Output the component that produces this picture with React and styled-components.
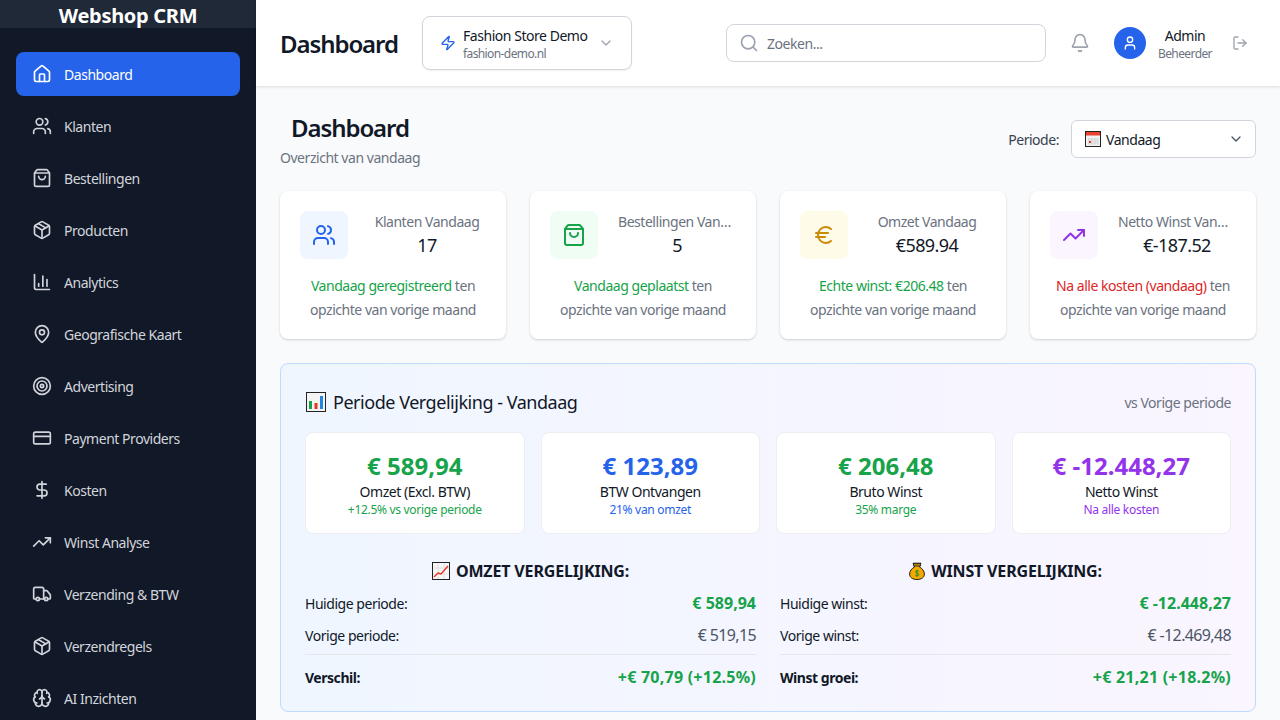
import React from 'react';
import styled, { createGlobalStyle } from 'styled-components';
import {
  House, Users, ShoppingBag, Package, ChartColumn, MapPin, Target, CreditCard, DollarSign,
  TrendingUp, Truck, Brain, Zap, ChevronDown, Search, Bell, User, LogOut, Euro,
} from 'lucide-react';

const GlobalStyle = createGlobalStyle`
  html, body, #root { margin: 0; height: 100%; }
  body {
    font-family: "Noto Sans", "Open Sans", sans-serif;
    color: #111827;
    overflow: hidden;
  }
  * { box-sizing: border-box; letter-spacing: -0.033em; }
`;

const Shell = styled.div`
  display: flex;
  width: 1280px;
  height: 720px;
  overflow: hidden;
`;

const Sidebar = styled.aside`
  width: 256px;
  flex-shrink: 0;
  background: #111827;
  overflow: hidden;
`;

const Brand = styled.div`
  height: 28px;
  background: #1f2937;
  color: #fff;
  font-size: 20px;
  font-weight: 700;
  line-height: 32px;
  letter-spacing: -0.015em;
  text-align: center;
  overflow: hidden;
`;

const Nav = styled.nav`
  display: flex;
  flex-direction: column;
  gap: 8px;
  padding: 24px 16px;
`;

const NavItem = styled.a`
  display: flex;
  align-items: center;
  gap: 12px;
  flex-shrink: 0;
  height: 44px;
  padding: 0 16px;
  border-radius: 8px;
  font-size: 14px;
  background: ${(p) => (p.$active ? '#2563eb' : 'transparent')};
  color: ${(p) => (p.$active ? '#fff' : '#d1d5db')};
`;

const Main = styled.div`
  flex: 1;
  min-width: 0;
  display: flex;
  flex-direction: column;
  background: #f9fafb;
`;

const TopBar = styled.header`
  height: 86px;
  flex-shrink: 0;
  display: flex;
  align-items: center;
  padding: 0 24px;
  background: #fff;
  box-shadow: 0 1px 3px rgba(0, 0, 0, 0.12);
  position: relative;
`;

const TopTitle = styled.h1`
  margin: 0;
  width: 142px;
  font-size: 24px;
  font-weight: 600;
  letter-spacing: -0.045em;
  color: #111827;
`;

const StoreSelect = styled.div`
  width: 210px;
  height: 54px;
  display: flex;
  align-items: center;
  padding: 0 17px;
  gap: 7px;
  background: #fff;
  border: 1px solid #d1d5db;
  border-radius: 8px;
  box-shadow: 0 1px 2px rgba(0, 0, 0, 0.06);
`;

const StoreText = styled.div`
  flex: 1;
  display: flex;
  flex-direction: column;
  padding-top: 2px;
  white-space: nowrap;
`;

const StoreName = styled.span`
  font-size: 14px;
  line-height: 20px;
  color: #111827;
`;

const StoreDomain = styled.span`
  font-size: 12px;
  line-height: 16px;
  letter-spacing: -0.05em;
  color: #6b7280;
`;

const SearchBox = styled.div`
  width: 320px;
  height: 38px;
  margin-left: 94px;
  display: flex;
  align-items: center;
  gap: 8px;
  padding: 0 12px;
  border: 1px solid #d1d5db;
  border-radius: 8px;
  font-size: 14px;
  color: #6b7280;
`;

const BellButton = styled.div`
  display: flex;
  margin-left: 24px;
  color: #9ca3af;
`;

const UserBlock = styled.div`
  display: flex;
  align-items: center;
  gap: 12px;
  margin-left: 24px;
`;

const Avatar = styled.div`
  width: 32px;
  height: 32px;
  border-radius: 50%;
  background: #2563eb;
  color: #fff;
  display: flex;
  align-items: center;
  justify-content: center;
`;

const UserText = styled.div`
  display: flex;
  flex-direction: column;
  align-items: center;
  padding-top: 2px;
`;

const UserName = styled.span`
  font-size: 14px;
  line-height: 20px;
  color: #111827;
`;

const UserRole = styled.span`
  font-size: 12px;
  line-height: 16px;
  letter-spacing: -0.05em;
  color: #6b7280;
`;

const LogoutButton = styled.div`
  display: flex;
  margin-left: 20px;
  color: #9ca3af;
`;

const Content = styled.main`
  flex: 1;
  min-height: 0;
  padding: 24px;
  overflow: hidden;
`;

const PageHead = styled.div`
  display: flex;
  justify-content: space-between;
  align-items: center;
  margin-bottom: 23px;
`;

const PageTitle = styled.h2`
  margin: 0;
  padding: 0 0 2px 11px;
  font-size: 24px;
  line-height: 36px;
  font-weight: 600;
  letter-spacing: -0.045em;
  color: #111827;
`;

const PageSub = styled.p`
  margin: 0;
  font-size: 14px;
  line-height: 20px;
  color: #6b7280;
`;

const PeriodWrap = styled.div`
  display: flex;
  align-items: center;
  gap: 12px;
  font-size: 14px;
  color: #374151;
`;

const PeriodSelect = styled.div`
  width: 185px;
  height: 38px;
  display: flex;
  align-items: center;
  gap: 5px;
  padding: 0 11px 0 13px;
  background: #fff;
  border: 1px solid #d1d5db;
  border-radius: 6px;
  color: #111827;
`;

const PeriodLabel = styled.span`
  flex: 1;
`;

const StatGrid = styled.div`
  display: grid;
  grid-template-columns: repeat(4, minmax(0, 1fr));
  gap: 24px;
  margin-bottom: 24px;
`;

const StatCard = styled.div`
  background: #fff;
  border-radius: 8px;
  padding: 20px;
  height: 148px;
  box-shadow: 0 1px 3px rgba(0, 0, 0, 0.12), 0 1px 2px rgba(0, 0, 0, 0.06);
`;

const StatTop = styled.div`
  display: flex;
  align-items: center;
  height: 48px;
`;

const IconBox = styled.div`
  width: 48px;
  height: 48px;
  flex-shrink: 0;
  display: flex;
  align-items: center;
  justify-content: center;
  border-radius: 8px;
  background: ${(p) => p.$bg};
  color: ${(p) => p.$color};
`;

const StatText = styled.div`
  flex: 1;
  min-width: 0;
  margin-left: 20px;
  text-align: center;
`;

const StatLabel = styled.div`
  font-size: 14px;
  line-height: 20px;
  color: #6b7280;
  white-space: nowrap;
  overflow: hidden;
  text-overflow: ellipsis;
`;

const StatValue = styled.div`
  font-size: 18px;
  line-height: 27px;
  color: #111827;
`;

const StatNote = styled.p`
  margin: 15px 0 0;
  font-size: 14px;
  line-height: 24px;
  text-align: center;
  color: #6b7280;
`;

const Highlight = styled.span`
  color: ${(p) => p.$color};
`;

const Panel = styled.section`
  height: 349px;
  padding: 24px;
  border: 1px solid #bfdbfe;
  border-radius: 8px;
  background: linear-gradient(to right, #eff6ff, #faf5ff);
`;

const PanelHead = styled.div`
  display: flex;
  align-items: center;
  justify-content: space-between;
  height: 28px;
  margin-bottom: 16px;
`;

const PanelTitle = styled.h3`
  display: flex;
  align-items: center;
  gap: 7px;
  margin: 0 0 0 1px;
  font-size: 18px;
  font-weight: 400;
  letter-spacing: -0.026em;
  color: #111827;
`;

const PanelHint = styled.span`
  font-size: 14px;
  color: #6b7280;
`;

const KpiGrid = styled.div`
  display: grid;
  grid-template-columns: repeat(4, minmax(0, 1fr));
  gap: 16px;
  margin-bottom: 25px;
`;

const KpiCard = styled.div`
  height: 102px;
  padding-top: 16px;
  background: #fff;
  border: 1px solid #eceef1;
  border-radius: 8px;
  text-align: center;
`;

const KpiValue = styled.div`
  font-size: 24px;
  line-height: 33px;
  font-weight: 700;
  letter-spacing: 0;
  color: ${(p) => p.$color};
`;

const KpiLabel = styled.div`
  font-size: 14px;
  line-height: 20px;
  color: #111827;
`;

const KpiNote = styled.div`
  font-size: 12px;
  line-height: 16px;
  letter-spacing: -0.025em;
  color: ${(p) => p.$color};
`;

const CompareGrid = styled.div`
  display: grid;
  grid-template-columns: 1fr 1fr;
  gap: 24px;
`;

const CompareTitle = styled.h4`
  display: flex;
  align-items: center;
  justify-content: center;
  gap: 6px;
  margin: 0 0 4px;
  height: 24px;
  font-size: 16px;
  font-weight: 700;
  letter-spacing: -0.01em;
  color: #111827;
`;

const Row = styled.div`
  display: flex;
  justify-content: space-between;
  align-items: center;
  height: 32px;
  font-size: 14px;
  color: #111827;
`;

const RowTotal = styled(Row)`
  height: 45px;
  margin-top: 3px;
  border-top: 1px solid #e5e7eb;
  font-weight: 700;
`;

const Amount = styled.span`
  font-size: 16px;
  font-weight: ${(p) => (p.$bold ? 700 : 400)};
  letter-spacing: ${(p) => (p.$bold ? '0' : '-0.04em')};
  color: ${(p) => p.$color};
`;

const TotalAmount = styled(Amount)`
  letter-spacing: 0.015em;
`;

const CalendarEmoji = () => (
  <svg width="16" height="16" viewBox="0 0 16 16">
    <rect x="0.5" y="0.5" width="15" height="15" fill="#f1f1f1" stroke="#222" />
    <rect x="1" y="1" width="14" height="3.5" fill="#e8432e" />
    <path d="M4 7v7M7 7v7M10 7v7M13 7v7M3 8h10M3 10h10M3 12h10" stroke="#c9c9c9" strokeWidth="0.7" />
    <rect x="4" y="10" width="2" height="2" fill="#e8432e" />
  </svg>
);

const BarsEmoji = () => (
  <svg width="20" height="20" viewBox="0 0 20 20">
    <rect x="0.5" y="0.5" width="19" height="19" fill="#f4f4f4" stroke="#222" />
    <path d="M3 17V9h3v8z" fill="#16a34a" />
    <path d="M8.5 17v-6h3v6z" fill="#ea3323" />
    <path d="M14 17V4h3v13z" fill="#1e88e5" />
  </svg>
);

const LineEmoji = () => (
  <svg width="18" height="18" viewBox="0 0 18 18">
    <rect x="0.5" y="0.5" width="17" height="17" fill="#f7f7f7" stroke="#222" />
    <path d="M6 1v16M12 1v16M1 6h16M1 12h16" stroke="#ddd" strokeWidth="0.8" />
    <path d="M2 15l4-4 3 1 7-8" fill="none" stroke="#ea3323" strokeWidth="1.4" />
  </svg>
);

const MoneyEmoji = () => (
  <svg width="16" height="18" viewBox="0 0 16 18">
    <path d="M4 1.2h8L10.4 5c3 1.4 5 4.200 5 7 0 3.500-3 5.500-7.400 5.500S.6 15.500.6 12c0-2.800 2-5.600 5-7z" fill="#f5a800" stroke="#222" strokeWidth="1" />
    <path d="M4.500 1.500h7v2.500h-7z" fill="#b8860b" stroke="#222" strokeWidth="0.8" />
    <path d="M9.800 9.300C9 8.500 6.600 8.500 6.600 10s3.200 1 3.200 2.600-2.600 1.500-3.500.6M8 7.800v7" fill="none" stroke="#14923a" strokeWidth="1" />
  </svg>
);

const navItems = [
  ['Dashboard', House],
  ['Klanten', Users],
  ['Bestellingen', ShoppingBag],
  ['Producten', Package],
  ['Analytics', ChartColumn],
  ['Geografische Kaart', MapPin],
  ['Advertising', Target],
  ['Payment Providers', CreditCard],
  ['Kosten', DollarSign],
  ['Winst Analyse', TrendingUp],
  ['Verzending & BTW', Truck],
  ['Verzendregels', Package],
  ['AI Inzichten', Brain],
];

const stats = [
  { label: 'Klanten Vandaag', value: '17', note: 'Vandaag geregistreerd', noteColor: '#16a34a', Icon: Users, bg: '#eff6ff', color: '#2563eb' },
  { label: 'Bestellingen Vandaag', value: '5', note: 'Vandaag geplaatst', noteColor: '#16a34a', Icon: ShoppingBag, bg: '#f0fdf4', color: '#16a34a' },
  { label: 'Omzet Vandaag', value: '€589.94', note: 'Echte winst: €206.48', noteColor: '#16a34a', Icon: Euro, bg: '#fefce8', color: '#ca8a04' },
  { label: 'Netto Winst Vandaag', value: '€-187.52', note: 'Na alle kosten (vandaag)', noteColor: '#dc2626', Icon: TrendingUp, bg: '#faf5ff', color: '#9333ea' },
];

const kpis = [
  { value: '€ 589,94', label: 'Omzet (Excl. BTW)', note: '+12.5% vs vorige periode', color: '#16a34a' },
  { value: '€ 123,89', label: 'BTW Ontvangen', note: '21% van omzet', color: '#2563eb' },
  { value: '€ 206,48', label: 'Bruto Winst', note: '35% marge', color: '#16a34a' },
  { value: '€ -12.448,27', label: 'Netto Winst', note: 'Na alle kosten', color: '#9333ea' },
];

const compares = [
  {
    title: 'OMZET VERGELIJKING:',
    Emoji: LineEmoji,
    currentLabel: 'Huidige periode:',
    current: '€ 589,94',
    previousLabel: 'Vorige periode:',
    previous: '€ 519,15',
    totalLabel: 'Verschil:',
    total: '+€ 70,79 (+12.5%)',
  },
  {
    title: 'WINST VERGELIJKING:',
    Emoji: MoneyEmoji,
    currentLabel: 'Huidige winst:',
    current: '€ -12.448,27',
    previousLabel: 'Vorige winst:',
    previous: '€ -12.469,48',
    totalLabel: 'Winst groei:',
    total: '+€ 21,21 (+18.2%)',
  },
];

const App = () => (
  <Shell>
    <GlobalStyle />
    <Sidebar>
      <Brand>Webshop CRM</Brand>
      <Nav>
        {navItems.map(([label, Icon], i) => (
          <NavItem key={label} $active={i === 0}>
            <Icon size={20} strokeWidth={2} />
            {label}
          </NavItem>
        ))}
      </Nav>
    </Sidebar>
    <Main>
      <TopBar>
        <TopTitle>Dashboard</TopTitle>
        <StoreSelect>
          <Zap size={16} color="#2563eb" />
          <StoreText>
            <StoreName>Fashion Store Demo</StoreName>
            <StoreDomain>fashion-demo.nl</StoreDomain>
          </StoreText>
          <ChevronDown size={16} color="#9ca3af" />
        </StoreSelect>
        <SearchBox>
          <Search size={20} color="#9ca3af" />
          Zoeken...
        </SearchBox>
        <BellButton><Bell size={20} /></BellButton>
        <UserBlock>
          <Avatar><User size={16} /></Avatar>
          <UserText>
            <UserName>Admin</UserName>
            <UserRole>Beheerder</UserRole>
          </UserText>
        </UserBlock>
        <LogoutButton><LogOut size={16} /></LogoutButton>
      </TopBar>
      <Content>
        <PageHead>
          <div>
            <PageTitle>Dashboard</PageTitle>
            <PageSub>Overzicht van vandaag</PageSub>
          </div>
          <PeriodWrap>
            Periode:
            <PeriodSelect>
              <CalendarEmoji />
              <PeriodLabel>Vandaag</PeriodLabel>
              <ChevronDown size={16} color="#4b5563" />
            </PeriodSelect>
          </PeriodWrap>
        </PageHead>
        <StatGrid>
          {stats.map(({ label, value, note, noteColor, Icon, bg, color }) => (
            <StatCard key={label}>
              <StatTop>
                <IconBox $bg={bg} $color={color}><Icon size={24} /></IconBox>
                <StatText>
                  <StatLabel>{label}</StatLabel>
                  <StatValue>{value}</StatValue>
                </StatText>
              </StatTop>
              <StatNote>
                <Highlight $color={noteColor}>{note}</Highlight> ten opzichte van vorige maand
              </StatNote>
            </StatCard>
          ))}
        </StatGrid>
        <Panel>
          <PanelHead>
            <PanelTitle><BarsEmoji />Periode Vergelijking - Vandaag</PanelTitle>
            <PanelHint>vs Vorige periode</PanelHint>
          </PanelHead>
          <KpiGrid>
            {kpis.map((k) => (
              <KpiCard key={k.label}>
                <KpiValue $color={k.color}>{k.value}</KpiValue>
                <KpiLabel>{k.label}</KpiLabel>
                <KpiNote $color={k.color}>{k.note}</KpiNote>
              </KpiCard>
            ))}
          </KpiGrid>
          <CompareGrid>
            {compares.map(({ title, Emoji, currentLabel, current, previousLabel, previous, totalLabel, total }) => (
              <div key={title}>
                <CompareTitle><Emoji />{title}</CompareTitle>
                <Row>
                  {currentLabel}
                  <Amount $bold $color="#16a34a">{current}</Amount>
                </Row>
                <Row>
                  {previousLabel}
                  <Amount $color="#4b5563">{previous}</Amount>
                </Row>
                <RowTotal>
                  {totalLabel}
                  <TotalAmount $bold $color="#16a34a">{total}</TotalAmount>
                </RowTotal>
              </div>
            ))}
          </CompareGrid>
        </Panel>
      </Content>
    </Main>
  </Shell>
);

export default App;
